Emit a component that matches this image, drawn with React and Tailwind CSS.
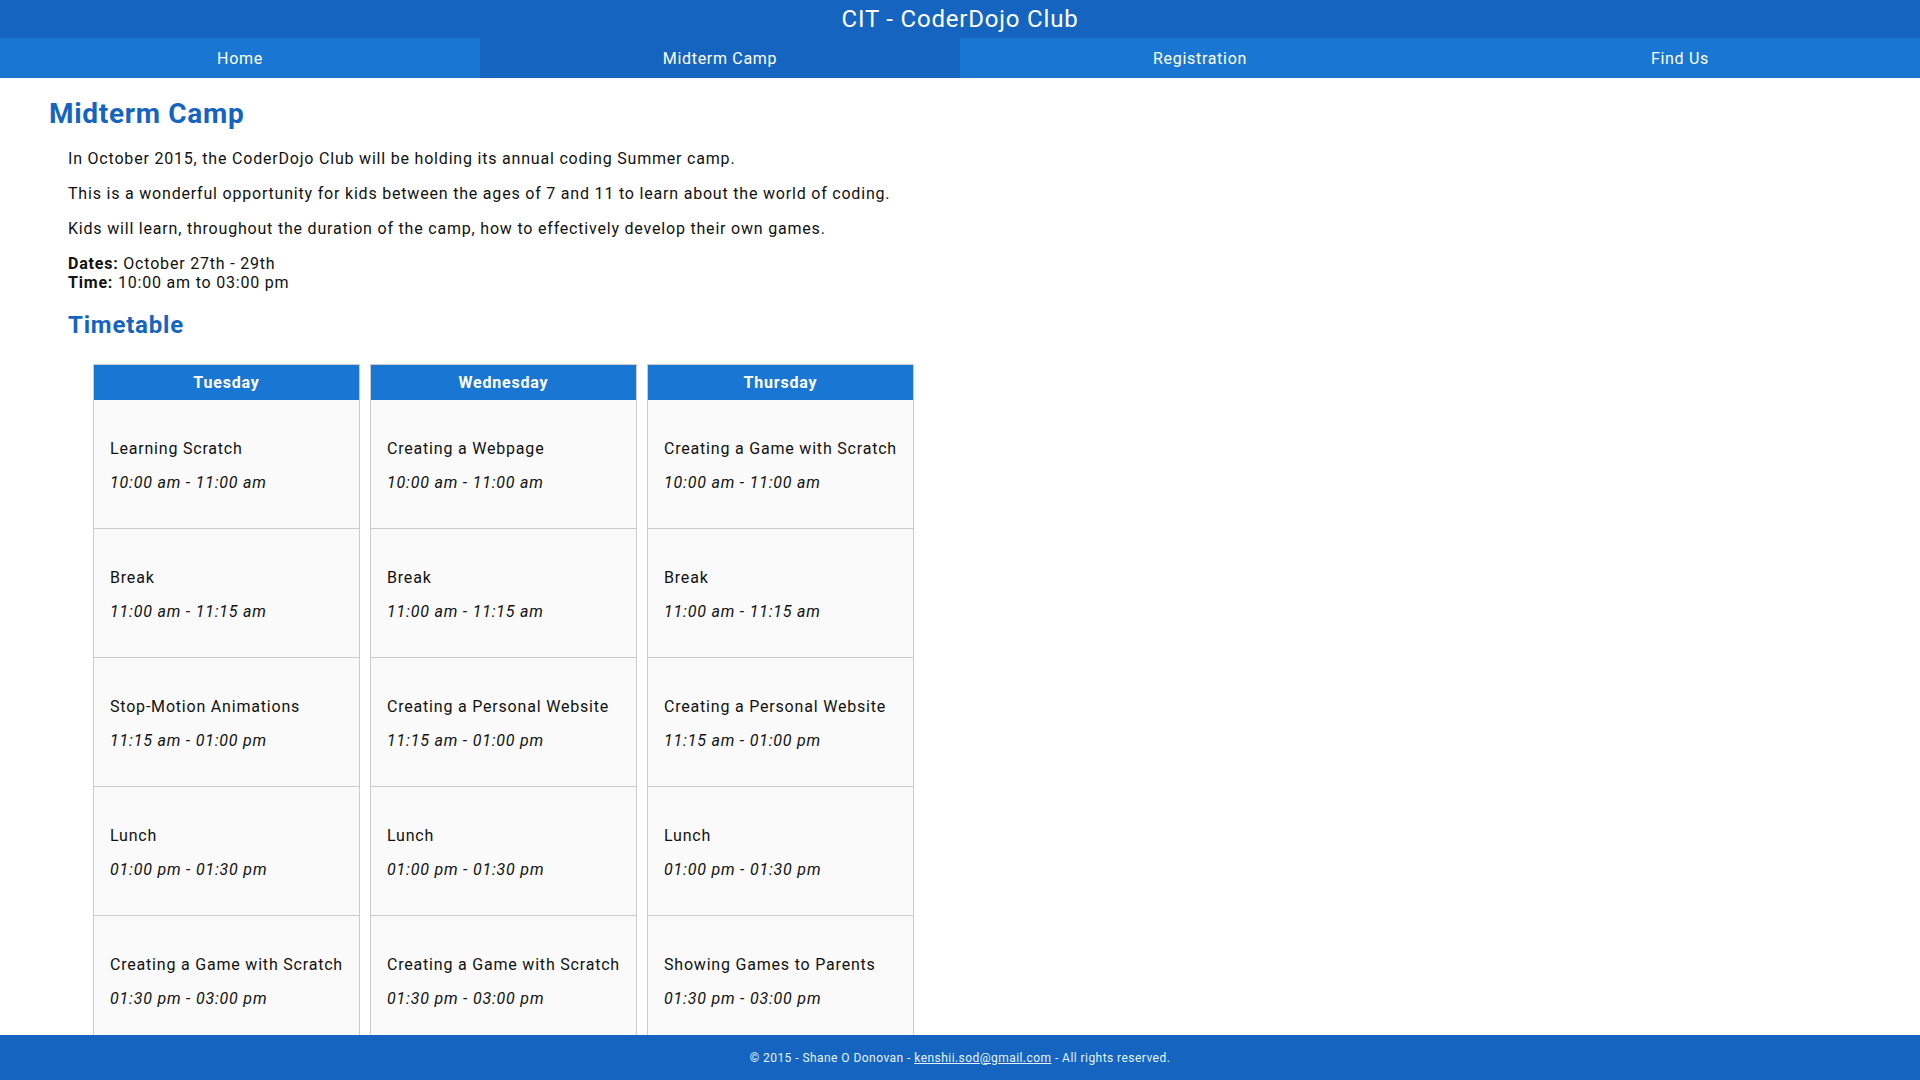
import React from "react";

const navItems = ["Home", "Midterm Camp", "Registration", "Find Us"];

const timetable = [
    {
        day: "Tuesday",
        slots: [
            ["Learning Scratch", "10:00 am - 11:00 am"],
            ["Break", "11:00 am - 11:15 am"],
            ["Stop-Motion Animations", "11:15 am - 01:00 pm"],
            ["Lunch", "01:00 pm - 01:30 pm"],
            ["Creating a Game with Scratch", "01:30 pm - 03:00 pm"],
        ],
    },
    {
        day: "Wednesday",
        slots: [
            ["Creating a Webpage", "10:00 am - 11:00 am"],
            ["Break", "11:00 am - 11:15 am"],
            ["Creating a Personal Website", "11:15 am - 01:00 pm"],
            ["Lunch", "01:00 pm - 01:30 pm"],
            ["Creating a Game with Scratch", "01:30 pm - 03:00 pm"],
        ],
    },
    {
        day: "Thursday",
        slots: [
            ["Creating a Game with Scratch", "10:00 am - 11:00 am"],
            ["Break", "11:00 am - 11:15 am"],
            ["Creating a Personal Website", "11:15 am - 01:00 pm"],
            ["Lunch", "01:00 pm - 01:30 pm"],
            ["Showing Games to Parents", "01:30 pm - 03:00 pm"],
        ],
    },
];

const App = () => {
    return (
        <div className="min-h-screen bg-white text-[#111] font-['Roboto','Liberation_Sans',sans-serif] tracking-[0.8px]">
            {/* Title bar */}
            <header className="h-[38px] bg-[#1565c0] flex items-center justify-center">
                <h1 className="text-[24px] leading-[28px] text-white font-normal tracking-[0.8px]">CIT - CoderDojo Club</h1>
            </header>

            {/* Nav */}
            <nav className="grid grid-cols-4 h-[40px] bg-[#1976d2]">
                {navItems.map((item) => (
                    <a
                        key={item}
                        href="#"
                        className={`flex items-center justify-center pt-[2px] text-[16px] text-white tracking-[0.7px] ${item === "Midterm Camp" ? "bg-[#1565c0]" : ""}`}
                    >
                        {item}
                    </a>
                ))}
            </nav>

            {/* Main */}
            <main className="pl-[49px] pb-[80px]">
                <h2 className="mt-[19px] mb-[19px] text-[28px] leading-[33px] font-bold text-[#1565c0] tracking-[0.7px]">Midterm Camp</h2>

                <div className="pl-[19px] text-[16px] leading-[19px]">
                    <p className="my-4">In October 2015, the CoderDojo Club will be holding its annual coding Summer camp.</p>
                    <p className="my-4">This is a wonderful opportunity for kids between the ages of 7 and 11 to learn about the world of coding.</p>
                    <p className="my-4">Kids will learn, throughout the duration of the camp, how to effectively develop their own games.</p>
                    <p className="mt-4">
                        <b>Dates:</b> October 27th - 29th
                        <br />
                        <b>Time:</b> 10:00 am to 03:00 pm
                    </p>

                    <h3 className="mt-[19px] text-[24px] leading-[28px] font-bold text-[#1565c0] tracking-[0.8px]">Timetable</h3>

                    {/* Timetable columns */}
                    <div className="flex gap-[10px] mt-[25px] ml-[25px]">
                        {timetable.map((col) => (
                            <div key={col.day} className="w-[267px] border border-[#cccccc] bg-[#fafafa]">
                                <div className="h-[35px] bg-[#1976d2] text-white font-bold flex items-center justify-center">
                                    {col.day}
                                </div>
                                {col.slots.map(([title, time], i) => (
                                    <div key={i} className="h-[129px] border-b border-[#cccccc] px-4 pt-[39px]">
                                        <p className="leading-[19px]">{title}</p>
                                        <p className="mt-[15px] leading-[19px] italic">{time}</p>
                                    </div>
                                ))}
                            </div>
                        ))}
                    </div>
                </div>
            </main>

            {/* Footer */}
            <footer className="fixed bottom-0 left-0 right-0 h-[45px] bg-[#1565c0] flex items-center justify-center text-[12px] text-[#e3f2fd] tracking-[0.45px]">
                <span>
                    © 2015 - Shane O Donovan - <a href="#" className="underline">kenshii.sod@gmail.com</a> - All rights reserved.
                </span>
            </footer>
        </div>
    );
};

export default App;
